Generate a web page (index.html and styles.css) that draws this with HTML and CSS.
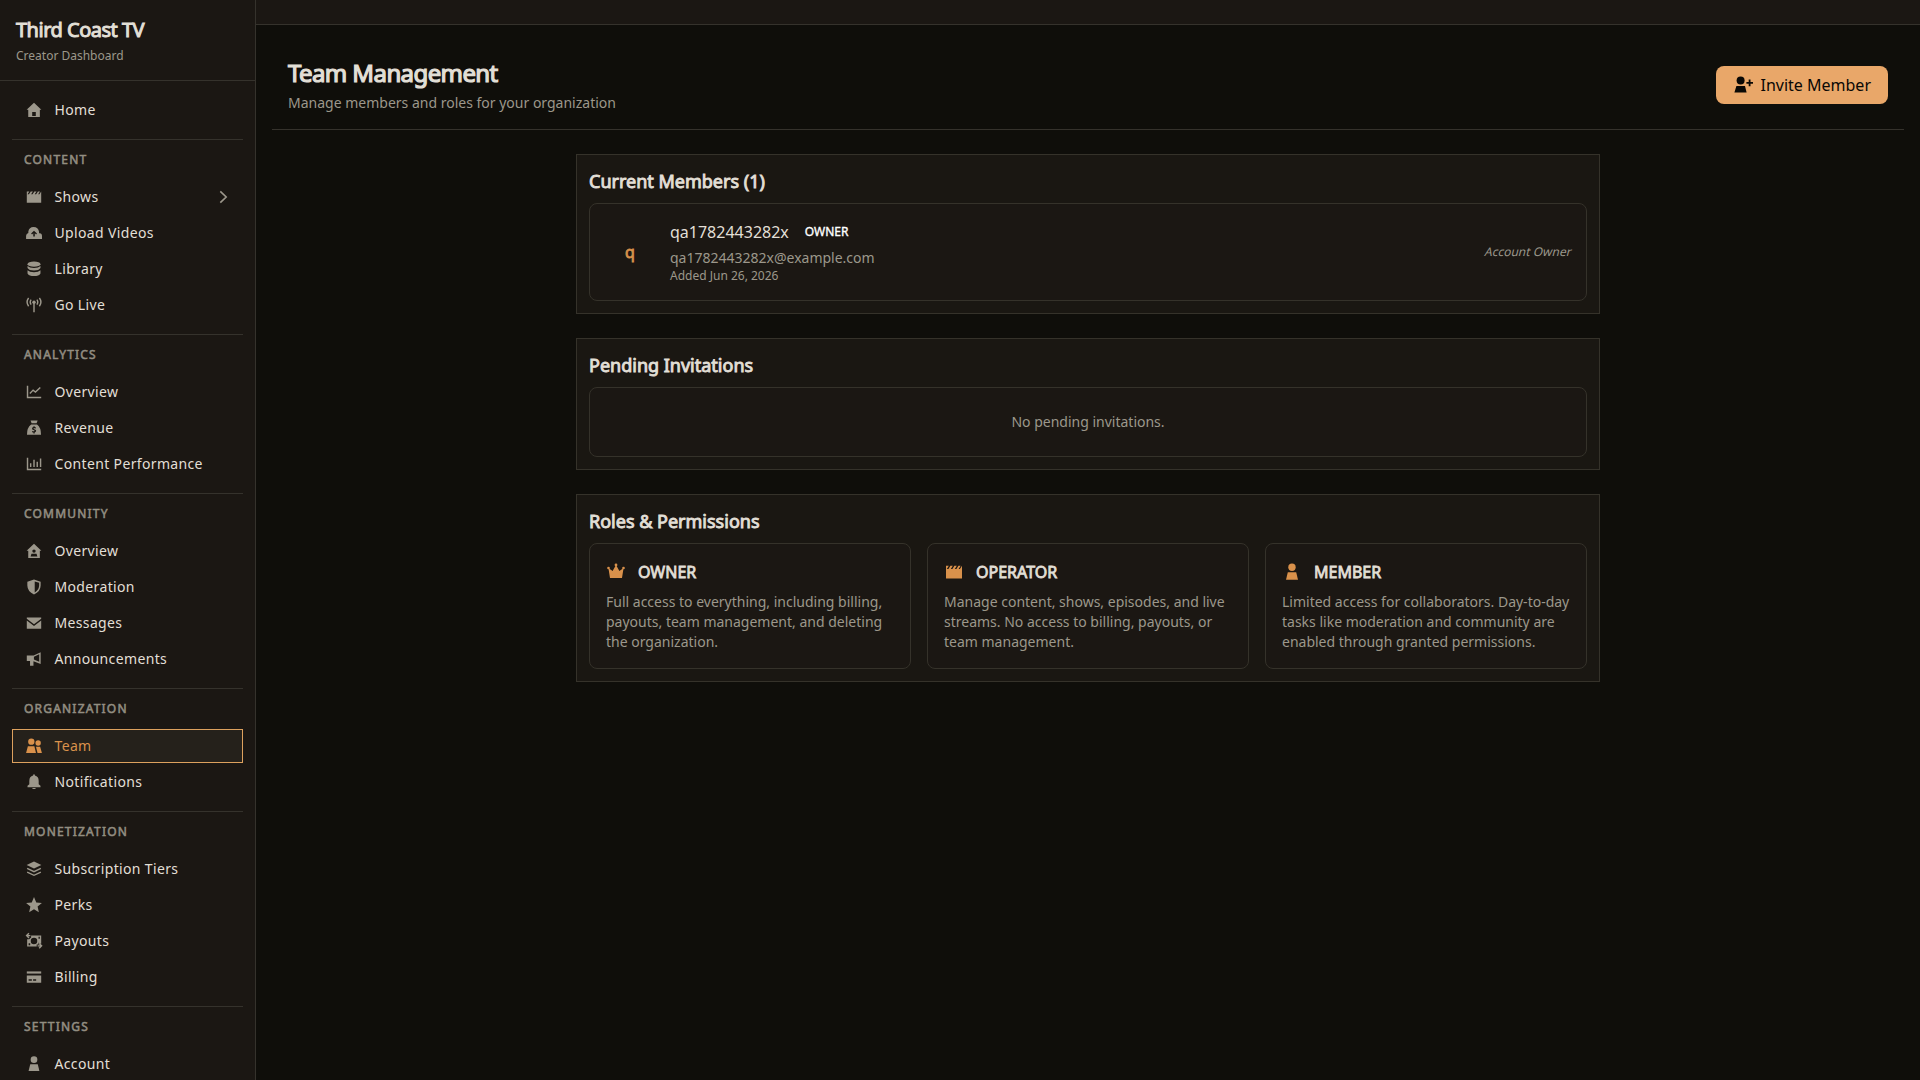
FILE: index.html
```html
<!DOCTYPE html>
<html lang="en">
<head>
  <meta charset="UTF-8">
  <title>Team Management - Third Coast TV</title>
  <link rel="stylesheet" href="styles.css">
</head>
<body>

  <!-- icon set, 20x20 grid -->
  <svg class="sprite" aria-hidden="true">
    <symbol id="i-home" viewBox="0 0 20 20"><path fill-rule="evenodd" d="M10 1.9 18.2 9.6H16.5V17.8H3.6V9.6H1.8zM8 12.2V16.6H12V12.2z"/></symbol>
    <symbol id="i-clapper" viewBox="0 0 20 20"><path d="M2 7.6V3.8H4.8L2.8 7zM6.4 3.8H8.8L6.8 7H4.4zM10.4 3.8H12.8L10.8 7H8.4zM14.4 3.8H16.6L14.6 7H12.4zM18 3.8V7.6H15.6zM2 6.9H18V16.4H2z"/></symbol>
    <symbol id="i-upload" viewBox="0 0 20 20"><path fill-rule="evenodd" d="M1.2 16.6V13Q1.4 10.6 3.7 10.1V8.2Q4.6 3.6 9.4 3.4Q14.8 3.6 15.6 8.6V10.2H16.8Q18.9 10.6 18.9 13V16.6zM10 7.4 6.8 10.6 7.8 11.7 9.2 10.4V14H10.9V10.4L12.3 11.7 13.3 10.6z"/></symbol>
    <symbol id="i-library" viewBox="0 0 20 20"><ellipse cx="10" cy="4.6" rx="7.2" ry="3"/><path d="M2.8 6.6Q5 9 10 9T17.2 6.6V8.9Q15.5 11.7 10 11.7T2.8 8.9zM2.8 11.3Q5 13.6 10 13.6T17.2 11.3V15Q15.5 17.9 10 17.9T2.8 15z"/></symbol>
    <symbol id="i-live" viewBox="0 0 20 20"><circle cx="10" cy="7" r="1.9"/><path d="M9.2 8H10.8V18H9.2z"/><path class="line" d="M4 2.2Q.6 6.8 4 11.4M6.8 4Q4.8 6.8 6.8 9.6M16 2.2Q19.4 6.8 16 11.4M13.2 4Q15.2 6.8 13.2 9.6"/></symbol>
    <symbol id="i-line" viewBox="0 0 20 20"><path class="line" d="M2.8 3V16.2H18M5.4 11.6 9 7.9 11.6 10 17 5"/></symbol>
    <symbol id="i-bars" viewBox="0 0 20 20"><path class="line" d="M2.8 3V16.2H18M6.3 9.2V13.4M10 5.4V13.4M13.6 7.6V13.4M17.3 3.8V13.4"/></symbol>
    <symbol id="i-money" viewBox="0 0 20 20"><path d="M6.2 1.8H14L12.9 4.8H7.3z"/><path fill-rule="evenodd" d="M6.8 6.2H13.4Q17.9 9.6 17.8 17.6H2.2Q2.1 9.6 6.8 6.2zM9.4 8V9Q7.8 9.3 7.8 10.8Q7.8 12 10.2 12.6Q10.9 13 10.2 13.6Q9.2 13.8 7.9 13.2V14.6L9.4 15V16.1H10.7V15Q12.4 14.5 12.4 12.9Q12.2 11.6 9.7 11Q9 10.5 10 10.2Q11 10.1 12 10.6V9.3L10.7 9V8z"/></symbol>
    <symbol id="i-community" viewBox="0 0 20 20"><path fill-rule="evenodd" d="M10 1.9 18.2 9.6H16.5V17.8H3.6V9.6H1.8zM10 8.2A1.9 1.9 0 0 0 10 12A1.9 1.9 0 0 0 10 8.2zM7.2 13 6.2 16H13.8L12.8 13z"/></symbol>
    <symbol id="i-shield" viewBox="0 0 20 20"><path fill-rule="evenodd" d="M10 1.8 17.4 4.2V8.4Q17.2 15.4 10 18.2Q2.8 15.4 2.6 8.4V4.2zM10.8 3.8V16Q15.4 13.6 15.7 8.4V5.3z"/></symbol>
    <symbol id="i-mail" viewBox="0 0 20 20"><path d="M2 3.8H18V5.2L10 11.4 2 5.2z"/><path d="M2 7.2 10 13.4 18 7.2V16.4H2z"/></symbol>
    <symbol id="i-horn" viewBox="0 0 20 20"><path fill-rule="evenodd" d="M2 6H9.6L17.4 2.4V15.6L9.4 12.4V17.6H5.6V12.2H2zM9.9 7.6V10.6L15.8 13.1V4.8z"/></symbol>
    <symbol id="i-team" viewBox="0 0 20 20"><circle cx="7" cy="5.2" r="3.5"/><circle cx="14.6" cy="6.6" r="3"/><path d="M3.2 10.3H10.4L12.2 17.8H1.2zM12.2 10.8H16.8L18.8 17.8H13.9z"/></symbol>
    <symbol id="i-bell" viewBox="0 0 20 20"><path d="M9 1.6H11V2.9Q15.2 4 15.2 8.8V12.4L17.2 14.2V15.8H2.8V14.2L4.8 12.4V8.8Q4.8 4 9 2.9zM7.8 16.6H12.2L11.2 17.9H8.8z"/></symbol>
    <symbol id="i-layers" viewBox="0 0 20 20"><path d="M10 1.6 18.2 5.5 10 9.4 1.8 5.5z"/><path class="line" d="M2.4 9.4 10 13 17.6 9.4M2.4 13.4 10 17 17.6 13.4"/></symbol>
    <symbol id="i-star" viewBox="0 0 20 20"><path d="M10 1.2 12.5 7.1 18.8 7.7 14 11.8 15.4 18 10 14.8 4.6 18 6 11.8 1.2 7.7 7.5 7.1z"/></symbol>
    <symbol id="i-payout" viewBox="0 0 20 20"><path fill-rule="evenodd" d="M6.8 3.8H18V13H16.4L15 11.6V14H13V16.2H2.4V8L4.6 8 6.8 6zM10 6.4A3.6 3.6 0 0 0 10 13.6A3.6 3.6 0 0 0 10 6.4zM15 5.4V7.4H16.5V5.4zM4 12.6V14.7H5.8V12.6z"/><path class="line" d="M4.4 1.4 1.8 4 4.4 6.6M2 4H6M15.8 12.8 18.4 15.4 15.8 18M18.2 15.4H14"/></symbol>
    <symbol id="i-card" viewBox="0 0 20 20"><path d="M2 3.8H18V6.2H2z"/><path fill-rule="evenodd" d="M2 8.2H18V16.4H2zM4 12.6V14.2H7.6V12.6zM9 12.6V14.2H12.4V12.6z"/></symbol>
    <symbol id="i-person" viewBox="0 0 20 20"><circle cx="10" cy="5.2" r="3.7"/><path d="M5.8 10.3H14.2L16 17.8H4z"/></symbol>
    <symbol id="i-crown" viewBox="0 0 20 20"><circle cx="10" cy="2.9" r="1.4"/><circle cx="2.5" cy="6" r="1.3"/><circle cx="17.5" cy="6" r="1.3"/><path d="M2.4 6 6.6 9 10 3 13.4 9 17.6 6 16 16H4z"/></symbol>
    <symbol id="i-invite" viewBox="0 0 20 20"><circle cx="7.6" cy="5.4" r="4"/><path d="M3.4 11H12L13.6 17.6H1.4zM15.7 4.4H17.5V7H20V8.8H17.5V11.2H15.7V8.8H13.4V7H15.7z"/></symbol>
    <symbol id="i-chevron" viewBox="0 0 16 16"><path class="line" d="M6.3 2.3 12.2 8 6.3 13.7"/></symbol>
  </svg>

  <div class="layout">
    <aside class="sidebar">
      <div class="brand">
        <div class="brand-name">Third Coast TV</div>
        <div class="brand-sub">Creator Dashboard</div>
      </div>

      <nav class="nav">
        <div class="nav-section">
          <a class="nav-link"><svg class="icon"><use href="#i-home"/></svg>Home</a>
        </div>
        <div class="nav-section">
          <div class="nav-label">CONTENT</div>
          <a class="nav-link"><svg class="icon"><use href="#i-clapper"/></svg>Shows<svg class="chevron"><use href="#i-chevron"/></svg></a>
          <a class="nav-link"><svg class="icon"><use href="#i-upload"/></svg>Upload Videos</a>
          <a class="nav-link"><svg class="icon"><use href="#i-library"/></svg>Library</a>
          <a class="nav-link"><svg class="icon"><use href="#i-live"/></svg>Go Live</a>
        </div>
        <div class="nav-section">
          <div class="nav-label">ANALYTICS</div>
          <a class="nav-link"><svg class="icon"><use href="#i-line"/></svg>Overview</a>
          <a class="nav-link"><svg class="icon"><use href="#i-money"/></svg>Revenue</a>
          <a class="nav-link"><svg class="icon"><use href="#i-bars"/></svg>Content Performance</a>
        </div>
        <div class="nav-section">
          <div class="nav-label">COMMUNITY</div>
          <a class="nav-link"><svg class="icon"><use href="#i-community"/></svg>Overview</a>
          <a class="nav-link"><svg class="icon"><use href="#i-shield"/></svg>Moderation</a>
          <a class="nav-link"><svg class="icon"><use href="#i-mail"/></svg>Messages</a>
          <a class="nav-link"><svg class="icon"><use href="#i-horn"/></svg>Announcements</a>
        </div>
        <div class="nav-section">
          <div class="nav-label">ORGANIZATION</div>
          <a class="nav-link active"><svg class="icon"><use href="#i-team"/></svg>Team</a>
          <a class="nav-link"><svg class="icon"><use href="#i-bell"/></svg>Notifications</a>
        </div>
        <div class="nav-section">
          <div class="nav-label">MONETIZATION</div>
          <a class="nav-link"><svg class="icon"><use href="#i-layers"/></svg>Subscription Tiers</a>
          <a class="nav-link"><svg class="icon"><use href="#i-star"/></svg>Perks</a>
          <a class="nav-link"><svg class="icon"><use href="#i-payout"/></svg>Payouts</a>
          <a class="nav-link"><svg class="icon"><use href="#i-card"/></svg>Billing</a>
        </div>
        <div class="nav-section">
          <div class="nav-label">SETTINGS</div>
          <a class="nav-link"><svg class="icon"><use href="#i-person"/></svg>Account</a>
        </div>
      </nav>
    </aside>

    <div class="content">
      <div class="topbar"></div>

      <main class="page">
        <header class="page-header">
          <div>
            <h1>Team Management</h1>
            <p class="subtitle">Manage members and roles for your organization</p>
          </div>
          <button class="invite-btn"><svg class="invite-icon"><use href="#i-invite"/></svg>Invite Member</button>
        </header>

        <div class="panels">
          <section class="panel">
            <h2>Current Members (1)</h2>
            <div class="card member">
              <div class="avatar">q</div>
              <div class="member-info">
                <div class="member-top">
                  <span class="member-name">qa1782443282x</span>
                  <span class="badge">OWNER</span>
                </div>
                <div class="member-email">qa1782443282x@example.com</div>
                <div class="member-date">Added Jun 26, 2026</div>
              </div>
              <div class="member-note">Account Owner</div>
            </div>
          </section>

          <section class="panel">
            <h2>Pending Invitations</h2>
            <div class="card empty">No pending invitations.</div>
          </section>

          <section class="panel">
            <h2>Roles &amp; Permissions</h2>
            <div class="roles">
              <div class="card role">
                <div class="role-head"><svg class="role-icon"><use href="#i-crown"/></svg><h3>OWNER</h3></div>
                <p>Full access to everything, including billing, payouts, team management, and deleting the organization.</p>
              </div>
              <div class="card role">
                <div class="role-head"><svg class="role-icon"><use href="#i-clapper"/></svg><h3>OPERATOR</h3></div>
                <p>Manage content, shows, episodes, and live streams. No access to billing, payouts, or team management.</p>
              </div>
              <div class="card role">
                <div class="role-head"><svg class="role-icon"><use href="#i-person"/></svg><h3>MEMBER</h3></div>
                <p>Limited access for collaborators. Day-to-day tasks like moderation and community are enabled through granted permissions.</p>
              </div>
            </div>
          </section>
        </div>
      </main>
    </div>
  </div>

</body>
</html>
```

FILE: styles.css
```css
* {
  box-sizing: border-box;
}

body {
  margin: 0;
  background: #0f0e0a;
  color: #e2dfd6;
  font-family: "Noto Sans", sans-serif;
  font-size: 14px;
  line-height: 20px;
}

h1, h2, h3, p {
  margin: 0;
}

/* headings are regular outlines thickened with a stroke */
h1, h2, h3, .brand-name, .avatar {
  font-weight: 400;
  -webkit-text-stroke: 0.05em currentColor;
}

.sprite {
  display: none;
}

.line {
  fill: none;
  stroke: currentColor;
  stroke-width: 1.6;
}

svg {
  fill: currentColor;
  flex: none;
}

.layout {
  display: flex;
  height: 100vh;
  overflow: hidden;
}

/* sidebar */
.sidebar {
  width: 256px;
  flex: none;
  background: #1b1713;
  border-right: 1px solid #35322c;
  overflow: hidden;
}

.brand {
  height: 81px;
  padding: 16px;
  border-bottom: 1px solid #35322c;
}

.brand-name {
  font-size: 20px;
  line-height: 28px;
  letter-spacing: -0.025em;
}

.brand-sub {
  margin-top: 4px;
  font-size: 12px;
  line-height: 16px;
  color: #9c978b;
}

.nav {
  padding: 0 12px;
}

.nav-section {
  display: flex;
  flex-direction: column;
  gap: 2px;
  padding-bottom: 12px;
}

.nav-section:first-child {
  padding-top: 12px;
}

.nav-section + .nav-section {
  border-top: 1px solid #35322c;
}

.nav-label {
  padding: 12px;
  margin-bottom: -2px;
  font-size: 12px;
  line-height: 16px;
  letter-spacing: 0.1em;
  color: #928d81;
  -webkit-text-stroke: 0.045em currentColor;
}

.nav-link {
  display: flex;
  align-items: center;
  gap: 11.5px;
  height: 34px;
  padding: 0 12px;
  border: 1px solid transparent;
  letter-spacing: 0.025em;
}

.nav-link.active {
  background: #25211b;
  border-color: #dda15e;
  color: #d9914b;
}

.icon {
  width: 18px;
  height: 18px;
  color: #9c978b;
}

.active .icon {
  color: #d9914b;
}

.chevron {
  width: 16px;
  height: 16px;
  margin-left: auto;
  color: #9c978b;
}

/* main area */
.content {
  flex: 1;
}

.topbar {
  height: 25px;
  background: #1b1713;
  border-bottom: 1px solid #35322c;
}

.page {
  padding: 16px;
}

.page-header {
  display: flex;
  justify-content: space-between;
  align-items: center;
  height: 89px;
  padding: 0 16px;
  border-bottom: 1px solid #35322c;
}

h1 {
  margin-bottom: 4px;
  font-size: 24px;
  line-height: 32px;
  letter-spacing: -0.025em;
}

.subtitle {
  color: #9c978b;
}

.invite-btn {
  display: flex;
  align-items: center;
  gap: 7.5px;
  height: 38px;
  width: 172px;
  padding: 0 17px;
  border: none;
  border-radius: 8px;
  background: #e9a769;
  color: #0a0805;
  font-family: inherit;
  font-size: 16px;
  white-space: nowrap;
}

.invite-icon {
  width: 20px;
  height: 20px;
}

.panels {
  display: flex;
  flex-direction: column;
  gap: 24px;
  width: 1024px;
  margin: 24px auto 0;
}

.panel {
  padding: 12px;
  background: #1a1712;
  border: 1px solid #35322a;
}

h2 {
  margin-bottom: 8px;
  font-size: 18px;
  line-height: 28px;
}

.card {
  padding: 16px;
  background: #1b1713;
  border: 1px solid #35322a;
  border-radius: 8px;
}

/* member row */
.member {
  display: flex;
  align-items: center;
  gap: 16px;
}

.avatar {
  width: 48px;
  line-height: 48px;
  text-align: center;
  font-size: 16px;
  color: #d9914b;
}

.member-info {
  flex: 1;
}

.member-top {
  display: flex;
  align-items: center;
  gap: 8px;
  margin-bottom: 4px;
}

.member-name {
  font-size: 16px;
  line-height: 24px;
}

.badge {
  padding: 0 8px;
  font-size: 12px;
  line-height: 16px;
  color: #fff;
  -webkit-text-stroke: 0.03em currentColor;
}

.member-email {
  color: #9c978b;
}

.member-date {
  font-size: 12px;
  line-height: 16px;
  color: #9c978b;
}

.member-note {
  font-size: 12px;
  line-height: 16px;
  color: #9c978b;
  transform: skewX(-14deg);
  transform-origin: 0 100%;
}

.empty {
  padding: 24px;
  text-align: center;
  color: #9c978b;
}

/* roles */
.roles {
  display: grid;
  grid-template-columns: repeat(3, 1fr);
  gap: 16px;
}

.role-head {
  display: flex;
  align-items: center;
  gap: 12px;
  margin-bottom: 8px;
}

.role-icon {
  width: 20px;
  height: 20px;
  color: #d9914b;
}

h3 {
  font-size: 16px;
  line-height: 24px;
}

.role p {
  color: #9c978b;
}
```
